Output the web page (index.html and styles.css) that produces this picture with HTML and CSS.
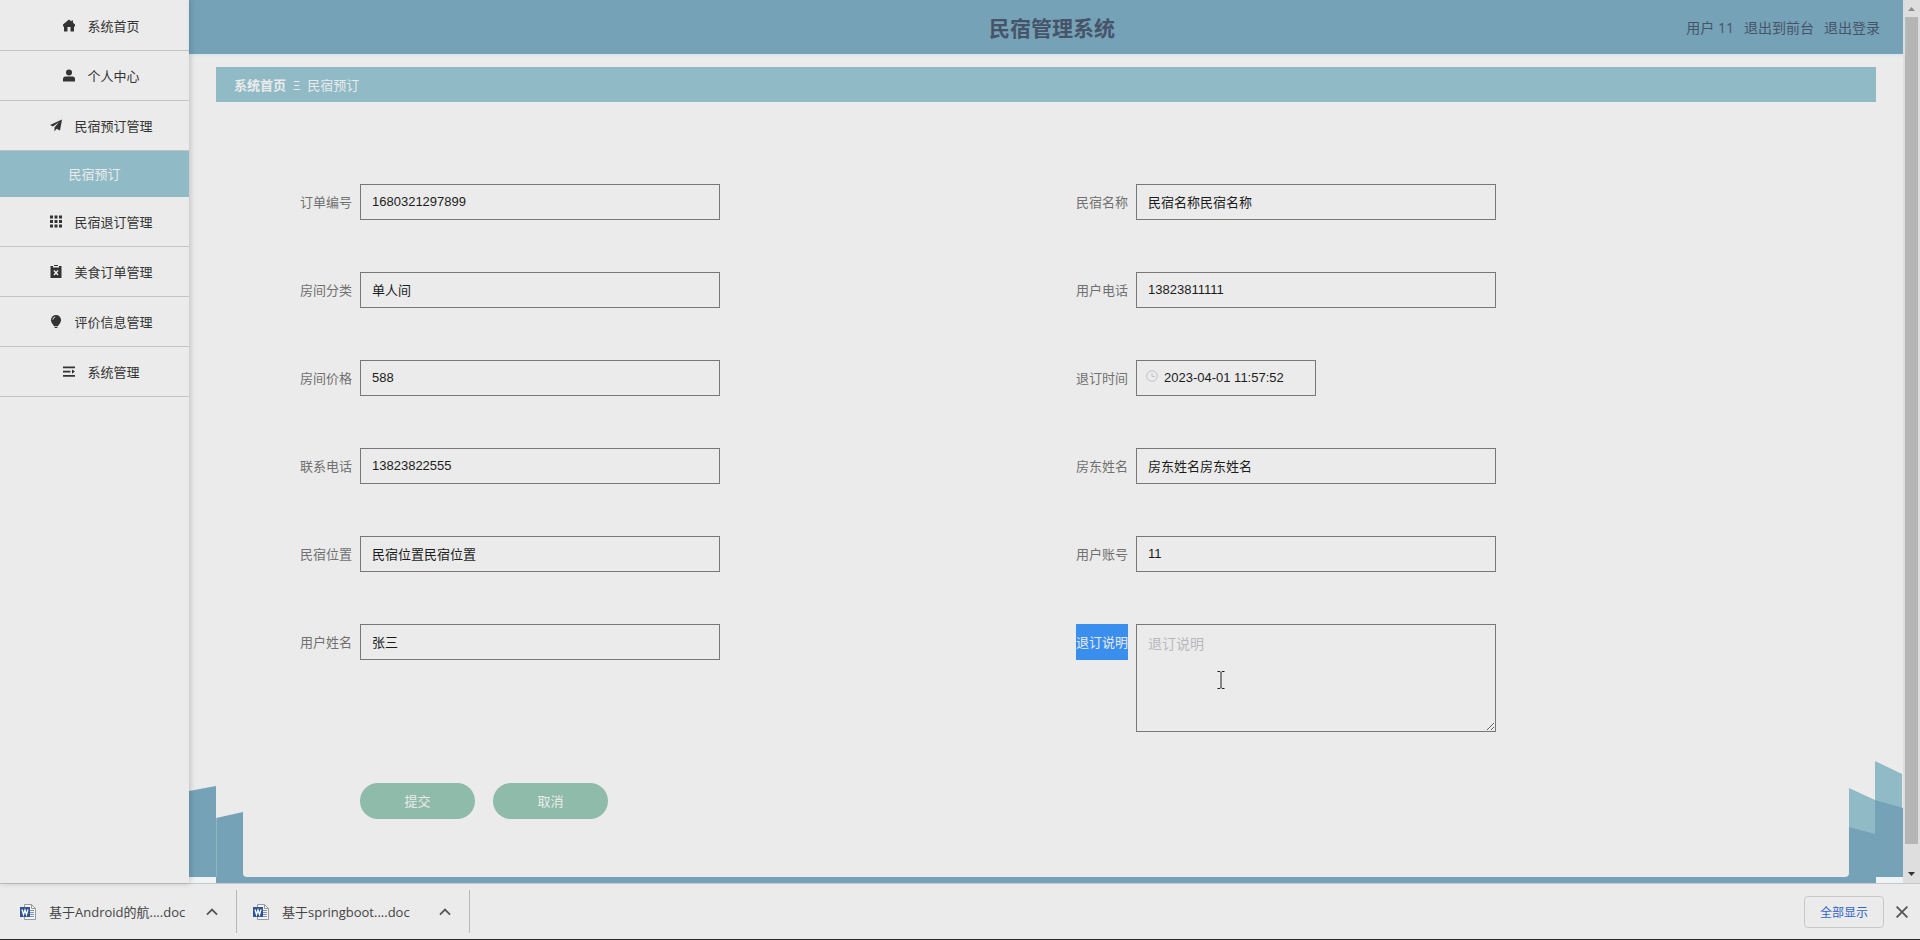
FILE: index.html
```html
<!DOCTYPE html>
<html lang="zh-CN">
<head>
    <meta charset="UTF-8">
    <meta name="viewport" content="width=device-width, initial-scale=1.0">
    <title>民宿管理系统</title>
    <link rel="stylesheet" href="styles.css">
</head>
<body>
    <div class="app">
        <!-- 左侧菜单 -->
        <nav class="sidebar">
            <ul class="menu">
                <li><a href="#" class="menu-item">
                    <svg class="icon" viewBox="0 0 12 12"><path d="M6 0 0 5v2h1v5h3.500V7.500h3V12H11V7h1V5l-2-1.700V1H8.500v1z"/></svg>系统首页</a></li>
                <li><a href="#" class="menu-item">
                    <svg class="icon" viewBox="0 0 12 12"><circle cx="6" cy="3" r="3"/><path d="M0 12V9.500Q0 7 2.500 7h7Q12 7 12 9.500V12z"/></svg>个人中心</a></li>
                <li><a href="#" class="menu-item">
                    <svg class="icon" viewBox="0 0 12 12"><path d="M12 0 0 5.500 3 7l6-4.500L4.500 8v4l2-2.700L10 11z"/></svg>民宿预订管理</a></li>
                <li><a href="#" class="submenu-item">民宿预订</a></li>
                <li><a href="#" class="menu-item">
                    <svg class="icon" viewBox="0 0 12 12"><path d="M0 0h3v3H0zM4.500 0h3v3h-3zM9 0h3v3H9zM0 4.500h3v3H0zM4.500 4.500h3v3h-3zM9 4.500h3v3H9zM0 9h3v3H0zM4.500 9h3v3h-3zM9 9h3v3H9z"/></svg>民宿退订管理</a></li>
                <li><a href="#" class="menu-item">
                    <svg class="icon" viewBox="0 0 12 13"><path d="M4 0h4v1H4zM.5 1H3v1.500h6V1h2.500v12H.5z"/><path d="m4 5.500 4 4.500M8 5.500 4 10" stroke="#ebebeb" stroke-width="1.500"/></svg>美食订单管理</a></li>
                <li><a href="#" class="menu-item">
                    <svg class="icon" viewBox="0 0 12 14"><path d="M6 0a5.500 5.500 0 0 1 5.500 5.500C11.500 8 9 11 8 12H4C3 11 .5 8 .5 5.500A5.500 5.500 0 0 1 6 0zM4.500 12.800h3V14h-3z"/><path d="M2.500 5Q3 2.500 5.200 2" fill="none" stroke="#ebebeb"/></svg>评价信息管理</a></li>
                <li><a href="#" class="menu-item">
                    <svg class="icon" viewBox="0 0 12 12"><path d="M0 1h12v1.800H0zM0 5.200h7.500V7H0zM0 9.400h12v1.800H0zM9 4l3 2.100-3 2.100z"/></svg>系统管理</a></li>
            </ul>
        </nav>

        <div class="main">
            <header class="header">
                <h1 class="title">民宿管理系统</h1>
                <div class="user-links">
                    <span>用户 11</span>
                    <a href="#">退出到前台</a>
                    <a href="#">退出登录</a>
                </div>
            </header>

            <main class="content">
                <div class="breadcrumb">
                    <a href="#">系统首页</a>
                    <span>Ξ</span>
                    <span>民宿预订</span>
                </div>

                <form class="order-form">
                    <div class="form-grid">
                        <div class="form-item">
                            <label for="orderNo">订单编号</label>
                            <input type="text" id="orderNo" value="1680321297899">
                        </div>
                        <div class="form-item">
                            <label for="houseName">民宿名称</label>
                            <input type="text" id="houseName" value="民宿名称民宿名称">
                        </div>
                        <div class="form-item">
                            <label for="roomType">房间分类</label>
                            <input type="text" id="roomType" value="单人间">
                        </div>
                        <div class="form-item">
                            <label for="userPhone">用户电话</label>
                            <input type="text" id="userPhone" value="13823811111">
                        </div>
                        <div class="form-item">
                            <label for="price">房间价格</label>
                            <input type="text" id="price" value="588">
                        </div>
                        <div class="form-item">
                            <label for="refundTime">退订时间</label>
                            <div class="date-box">
                                <svg class="clock" viewBox="0 0 12 12"><circle cx="6" cy="6" r="5.300"/><path d="M6 3v3.500h3"/></svg>
                                <input type="text" id="refundTime" value="2023-04-01 11:57:52">
                            </div>
                        </div>
                        <div class="form-item">
                            <label for="contactPhone">联系电话</label>
                            <input type="text" id="contactPhone" value="13823822555">
                        </div>
                        <div class="form-item">
                            <label for="ownerName">房东姓名</label>
                            <input type="text" id="ownerName" value="房东姓名房东姓名">
                        </div>
                        <div class="form-item">
                            <label for="address">民宿位置</label>
                            <input type="text" id="address" value="民宿位置民宿位置">
                        </div>
                        <div class="form-item">
                            <label for="account">用户账号</label>
                            <input type="text" id="account" value="11">
                        </div>
                        <div class="form-item">
                            <label for="userName">用户姓名</label>
                            <input type="text" id="userName" value="张三">
                        </div>
                        <div class="form-item">
                            <label for="remark"><span class="selected">退订说明</span></label>
                            <div class="remark-box">
                                <textarea id="remark" placeholder="退订说明"></textarea>
                                <svg class="cursor" viewBox="0 0 8 18"><path d="M.5.500h2.500L4 1.500l1-1h2.500M4 1.500v15M.5 17.500H3l1-1 1 1h2.500"/></svg>
                            </div>
                        </div>
                    </div>
                    <div class="form-buttons">
                        <button type="button">提交</button>
                        <button type="button">取消</button>
                    </div>
                </form>
            </main>

            <!-- 底部装饰 -->
            <div class="decor">
                <svg class="decor-left" viewBox="0 0 58 122">
                    <path class="pale" d="M0 116h27v6H0z"/>
                    <path class="dark" d="M0 30 27 25v91H0zM27 57l27-6v61q0 4 4 4v6H27z"/>
                    <path d="M27.500 57v59" stroke="#8db6c5"/>
                </svg>
                <div class="decor-line"></div>
                <svg class="decor-right" viewBox="0 0 58 122">
                    <path class="pale" d="M31 116h27v6H31z"/>
                    <path class="light" d="M4 27l26 12v40H4zM30 0l27 13v50H30z"/>
                    <path class="dark" d="M4 66l26 7V39l28 8v69H31v6H0v-6q4 0 4-4z"/>
                </svg>
            </div>
        </div>

        <!-- 滚动条 -->
        <div class="scrollbar">
            <svg class="arrow" viewBox="0 0 17 17"><path d="M5 11h7L8.500 7z" fill="#8c8c8c"/></svg>
            <div class="thumb"></div>
            <svg class="arrow" viewBox="0 0 17 17"><path d="M5 6h7l-3.500 4z" fill="#333"/></svg>
        </div>
    </div>

    <!-- 下载栏 -->
    <footer class="downloads">
        <div class="download">
            <svg class="doc-icon" viewBox="0 0 16 16"><path d="M4.500.500h7l4 4v11h-11z" fill="#f4f4f4" stroke="#9a9a9a"/><path d="M11.500.500v4h4" fill="none" stroke="#9a9a9a"/><path d="M10 6.500h4M10 8.500h4M10 10.500h4M10 12.500h4" stroke="#7d94b8"/><path d="M0 3h10v10H0z" fill="#2f5597"/><path d="m2 5.500 1.500 5L5 6l1.500 4.500L8 5.500" fill="none" stroke="#fff" stroke-width="1.300"/></svg>
            <span class="file-name">基于Android的航....doc</span>
            <button type="button" class="more" aria-label="更多"><svg viewBox="0 0 10 10"><path d="M.8 7.200 5 3l4.200 4.200"/></svg></button>
        </div>
        <div class="download">
            <svg class="doc-icon" viewBox="0 0 16 16"><path d="M4.500.500h7l4 4v11h-11z" fill="#f4f4f4" stroke="#9a9a9a"/><path d="M11.500.500v4h4" fill="none" stroke="#9a9a9a"/><path d="M10 6.500h4M10 8.500h4M10 10.500h4M10 12.500h4" stroke="#7d94b8"/><path d="M0 3h10v10H0z" fill="#2f5597"/><path d="m2 5.500 1.500 5L5 6l1.500 4.500L8 5.500" fill="none" stroke="#fff" stroke-width="1.300"/></svg>
            <span class="file-name">基于springboot....doc</span>
            <button type="button" class="more" aria-label="更多"><svg viewBox="0 0 10 10"><path d="M.8 7.200 5 3l4.200 4.200"/></svg></button>
        </div>
        <button type="button" class="show-all">全部显示</button>
        <button type="button" class="more" aria-label="关闭"><svg viewBox="0 0 10 10"><path d="m.5.500 9 9M9.500.500l-9 9"/></svg></button>
    </footer>
</body>
</html>
```
FILE: styles.css
```css
* {
    box-sizing: border-box;
}

body {
    margin: 0;
    height: 100vh;
    display: flex;
    flex-direction: column;
    overflow: hidden;
    background-color: #ebebeb;
    color: #333;
    font-family: "Open Sans", "Noto Sans CJK SC", sans-serif;
    font-size: 13px;
}

a {
    color: inherit;
    text-decoration: none;
}

button,
input,
textarea {
    font-family: "Liberation Sans", "Noto Sans CJK SC", sans-serif;
    font-size: 13px;
}

.app {
    flex: 1;
    display: flex;
    min-height: 0;
}

/* 左侧菜单 */
.sidebar {
    width: 189px;
    flex-shrink: 0;
    box-shadow: 1px 0 6px rgba(0, 0, 0, 0.2);
    z-index: 1;
}

.menu {
    list-style: none;
    margin: 0;
    padding: 1px 0 0;
}

.menu-item {
    display: flex;
    align-items: center;
    justify-content: center;
    gap: 12px;
    height: 50px;
    padding-left: 14px;
    border-bottom: 1px solid #c4c4c4;
}

.submenu-item {
    display: block;
    line-height: 46px;
    text-align: center;
    background-color: #90bac6;
    color: #ebebeb;
}

.icon {
    width: 12px;
    height: 13px;
    fill: #333;
}

/* 顶部 */
.main {
    position: relative;
    flex: 1;
    display: flex;
    flex-direction: column;
}

.header {
    display: grid;
    grid-template-columns: 1fr auto 1fr;
    align-items: center;
    height: 54px;
    padding: 0 23px 0 35px;
    background-color: #75a2b7;
    color: #465469;
    box-shadow: 0 1px 4px #d3dfea;
}

.title {
    grid-column: 2;
    margin: 0;
    font-size: 21px;
}

.user-links {
    display: flex;
    justify-content: flex-end;
    gap: 10px;
    font-size: 14px;
}

.content {
    flex: 1;
    padding: 13px 27px 0;
}

.breadcrumb {
    display: flex;
    align-items: center;
    gap: 7px;
    height: 35px;
    padding: 0 18px;
    background-color: #90bac6;
    color: #ebebeb;
}

.breadcrumb a {
    font-weight: bold;
}

/* 表单 */
.order-form {
    padding: 82px 54px 0;
}

.form-grid {
    display: grid;
    grid-template-columns: 1fr 1fr;
    row-gap: 52px;
}

.form-item {
    display: flex;
    align-items: flex-start;
}

.form-item label {
    width: 90px;
    padding-right: 8px;
    line-height: 36px;
    text-align: right;
    color: #707070;
}

.selected {
    display: inline-block;
    background-color: #3a8eee;
    color: #ebebeb;
}

.form-item input,
.form-item textarea {
    display: block;
    width: 360px;
    height: 36px;
    padding: 0 11px 2px;
    border: 1px solid #787878;
    border-radius: 0;
    background-color: transparent;
    color: #1c1c1c;
    outline: none;
}

.form-item textarea {
    height: 108px;
    padding: 8px 11px;
    font-size: 14px;
}

.form-item textarea::placeholder {
    color: #b8b8bc;
}

.date-box,
.remark-box {
    position: relative;
}

.date-box input {
    width: 180px;
    padding-left: 27px;
}

.clock {
    position: absolute;
    left: 10px;
    top: 10px;
    width: 12px;
    height: 12px;
    fill: none;
    stroke: #bfc2c8;
}

.cursor {
    position: absolute;
    left: 81px;
    top: 47px;
    width: 8px;
    height: 18px;
    fill: none;
    stroke: #222;
}

.form-buttons {
    display: flex;
    gap: 18px;
    padding: 51px 0 0 90px;
}

.form-buttons button {
    width: 115px;
    height: 36px;
    padding: 0 0 2px;
    border: none;
    border-radius: 18px;
    background-color: #8ebbaa;
    color: #ebebeb;
    cursor: pointer;
}

/* 底部装饰 */
.decor {
    position: absolute;
    left: 0;
    right: 0;
    bottom: 0;
    display: flex;
    align-items: flex-end;
    pointer-events: none;
}

.decor svg {
    width: 58px;
    height: 122px;
}

.decor-line {
    flex: 1;
    height: 6px;
    background-color: #75a2b7;
}

.dark {
    fill: #75a2b7;
}

.light {
    fill: #90bac6;
}

.pale {
    fill: #eef3f6;
}

/* 滚动条 */
.scrollbar {
    display: flex;
    flex-direction: column;
    width: 17px;
    background-color: #dedede;
}

.arrow {
    width: 17px;
    height: 17px;
}

.thumb {
    flex: 1;
    margin: 0 2px 22px;
    background-color: #b5b5b5;
}

/* 下载栏 */
.downloads {
    display: flex;
    align-items: center;
    height: 57px;
    padding-right: 12px;
    border-top: 1px solid #c8c8c8;
    border-bottom: 1px solid #26262a;
    color: #444;
}

.download {
    display: flex;
    align-items: center;
    width: 233px;
    height: 43px;
    padding: 0 18px 0 16px;
    border-right: 1px solid #b8b8b8;
}

.download:first-child {
    width: 237px;
    padding-left: 20px;
}

.doc-icon {
    width: 16px;
    height: 16px;
    margin-right: 13px;
}

.file-name {
    flex: 1;
    font-size: 13px;
    white-space: nowrap;
}

.more {
    width: 12px;
    height: 12px;
    padding: 0;
    border: none;
    background: none;
    cursor: pointer;
}

.more svg {
    display: block;
    fill: none;
    stroke: #555;
    stroke-width: 1.5;
}

.show-all {
    width: 80px;
    height: 32px;
    margin: 0 12px 0 auto;
    padding: 0;
    border: 1px solid #c6c8cc;
    border-radius: 4px;
    background: none;
    color: #3264c8;
    font-size: 12px;
    cursor: pointer;
}
```
